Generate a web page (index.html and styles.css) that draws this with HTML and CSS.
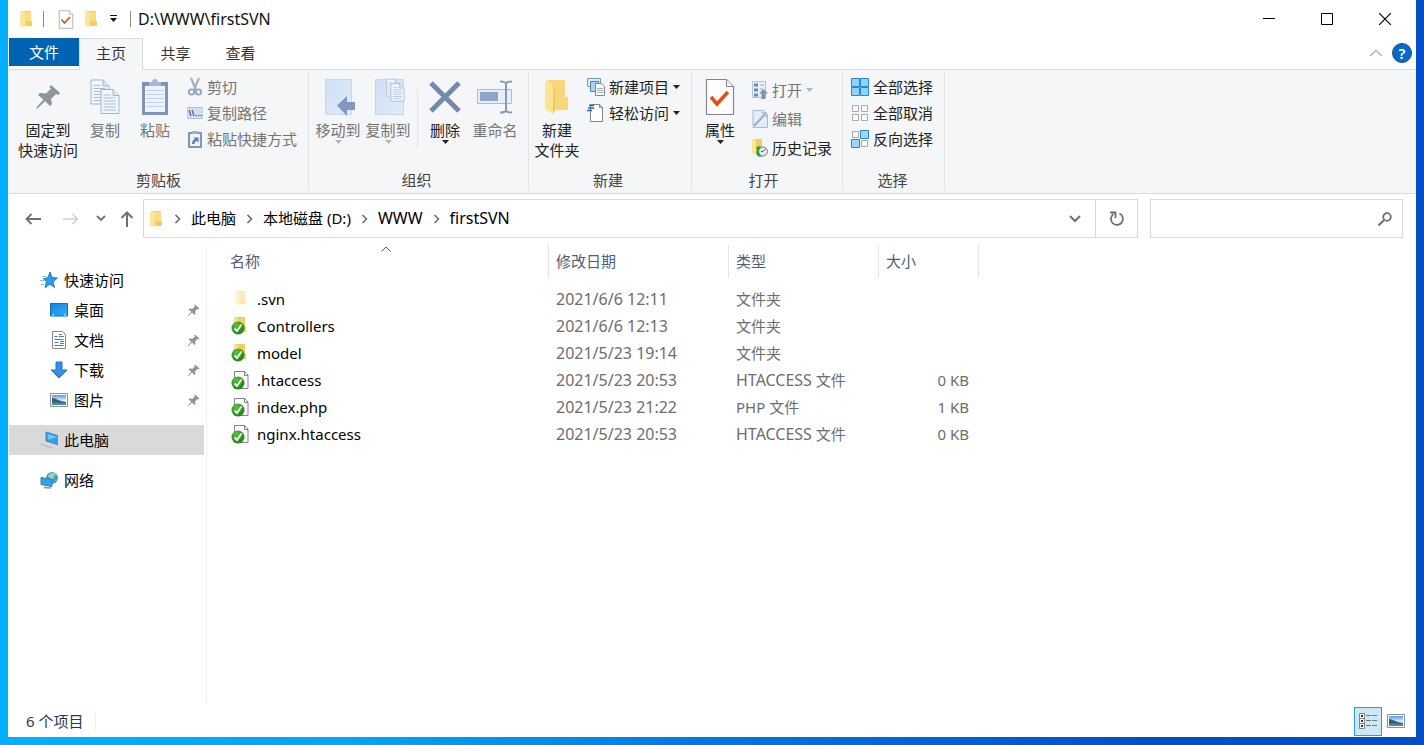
FILE: index.html
```html
<!DOCTYPE html>
<html lang="zh-CN">
<head>
<meta charset="utf-8">
<title>D:\WWW\firstSVN</title>
<link rel="stylesheet" href="styles.css">
</head>
<body>
<svg class="defs" aria-hidden="true">
  <defs>
    <linearGradient id="gFold" x1="0" x2="1"><stop offset="0" stop-color="#ffe9a2"/><stop offset="1" stop-color="#f6cf5f"/></linearGradient>
    <linearGradient id="gBlue" x1="0" y1="0" x2="1" y2="1"><stop offset="0" stop-color="#1583dc"/><stop offset="1" stop-color="#2cb0fb"/></linearGradient>
    <linearGradient id="gPale" x1="0" y1="0" x2="1" y2="1"><stop offset="0" stop-color="#cfdff5"/><stop offset="1" stop-color="#e0ebfa"/></linearGradient>
    <radialGradient id="gGreen" cx=".4" cy=".3" r=".8"><stop offset="0" stop-color="#5cc23f"/><stop offset="1" stop-color="#15780f"/></radialGradient>
    <linearGradient id="gSky" x1="0" y1="0" x2="0" y2="1"><stop offset="0" stop-color="#5d9be0"/><stop offset=".6" stop-color="#e4f3fb"/></linearGradient>
  </defs>
  <symbol id="folder" viewBox="0 0 16 18">
    <path d="M4 1h9v10h1v5H4z" fill="#f5cd62"/>
    <path d="M2 1l5 1v14.500L5 17l-3-1.500z" fill="#ffe69a"/>
    <path d="M7 2h6v9H7z" fill="#fbdc80"/>
  </symbol>
  <symbol id="checkdoc" viewBox="0 0 30 38">
    <path d="M1.500 1.500h20l7 7v28h-27z" fill="#fff" stroke="#85838f" stroke-width="1.200"/>
    <path d="M21.500 1.500v7h7" fill="#eef2f7" stroke="#85838f"/>
    <path d="M6 19l6 7 11-12" fill="none" stroke="#e25018" stroke-width="3.500"/>
  </symbol>
  <symbol id="pin" viewBox="0 0 26 26">
    <path d="M16 1l9 8-2 2-2-1-5 5 1 5-2 2-5-5-7 7-2 1 1-2 6.500-7.500L3 11l2-2 6 .500 5-5L14.500 3z" fill="#8d949b"/>
  </symbol>
  <symbol id="page" viewBox="0 0 20 26">
    <path d="M1 1h12l6 6v18H1z" fill="#f3f7fd" stroke="#9fb3d3"/>
    <path d="M13 1v6h6" fill="#dce7f6" stroke="#9fb3d3"/>
    <path d="M3.500 6.500h7M3.500 9.500h12M3.500 12.500h12.500M3.500 15.500h12.500M3.500 18.500h12.500M3.500 21.500h12.500" stroke="#a9bcda"/>
  </symbol>
  <symbol id="photo" viewBox="0 0 18 14">
    <path d="M.5.5h17v13H.5z" fill="#fff" stroke="#8b9198"/>
    <path d="M2 2h14v10H2z" fill="url(#gSky)"/>
    <path d="M2 5c4 0 6 3 14 4v2H2z" fill="#2d6469"/>
    <path d="M2 10c5-1 9 0 14 0v2H2z" fill="#4a86b8"/>
  </symbol>
  <symbol id="badge" viewBox="0 0 14 14">
    <circle cx="7" cy="7" r="6.500" fill="url(#gGreen)"/>
    <path d="M3.500 7.500L6 10l4.500-6.500" fill="none" stroke="#f2fff0" stroke-width="1.800"/>
  </symbol>
  <symbol id="vfolder" viewBox="0 0 20 20">
    <path d="M5 1h10v10h1v5H5z" fill="#f2cc5c"/><path d="M4 1l4 1v13l-4 1z" fill="#ffe08a"/>
    <use href="#badge" x="1" y="5" width="14" height="14"/>
  </symbol>
  <symbol id="vfile" viewBox="0 0 20 20">
    <path d="M4.500 1.500h10l3.500 3.500v13.500H4.500z" fill="#fff" stroke="#83838b"/><path d="M14.500 1.500v4H18" fill="none" stroke="#83838b"/>
    <use href="#badge" x="1" y="6" width="14" height="14"/>
  </symbol>
  <symbol id="down" viewBox="0 0 7 4"><path d="M0 0h7L3.500 4z" fill="currentColor"/></symbol>
  <symbol id="next" viewBox="0 0 7 10"><path d="M1.500 1l4 4-4 4" fill="none" stroke="#6b6b6b" stroke-width="1.600"/></symbol>
</svg>

<main class="window">
  <header class="titlebar">
    <svg class="i-folder" viewBox="0 0 16 18"><use href="#folder"/></svg>
    <span class="tick"></span>
    <button class="qa qa-wide" aria-label="属性"><svg width="16" height="19"><use href="#checkdoc"/></svg></button>
    <button class="qa" aria-label="新建文件夹"><svg class="i-folder" viewBox="0 0 16 18"><use href="#folder"/></svg></button>
    <button class="qa qa-menu" aria-label="自定义快速访问工具栏"><svg width="9" height="8"><path d="M1 .5h7" stroke="#111"/><path d="M1 3h7L4.500 7z" fill="#111"/></svg></button>
    <span class="tick tick-end"></span>
    <h1 class="title latin">D:\WWW\firstSVN</h1>
    <div class="controls">
      <button aria-label="最小化"><svg width="12" height="12"><path d="M0 5.500h12" stroke="#000"/></svg></button>
      <button aria-label="最大化"><svg width="12" height="12"><path d="M.5.5h11v11H.5z" fill="none" stroke="#000"/></svg></button>
      <button aria-label="关闭"><svg width="12" height="12"><path d="M0 0l12 12M12 0L0 12" stroke="#000" stroke-width="1.200"/></svg></button>
    </div>
  </header>

  <nav class="tabs">
    <button class="tab file">文件</button>
    <button class="tab active">主页</button>
    <button class="tab">共享</button>
    <button class="tab">查看</button>
    <div class="tabs-end">
      <button aria-label="折叠功能区"><svg width="14" height="8"><path d="M1 7l6-5.500L13 7" fill="none" stroke="#b4b4b4" stroke-width="1.500"/></svg></button>
      <button class="help" aria-label="帮助">?</button>
    </div>
  </nav>

  <section class="ribbon">
    <div class="group clipboard">
      <div class="tools">
        <button class="big wide"><svg width="26" height="38" viewBox="0 0 26 38"><use href="#pin" y="6" width="26" height="26"/></svg><span>固定到<br>快速访问</span></button>
        <button class="big off"><svg width="32" height="38" viewBox="0 0 32 38"><use href="#page" x="1" y="1" width="20" height="26"/><use href="#page" x="11" y="10" width="20" height="27"/></svg><span>复制</span></button>
        <button class="big off"><svg width="28" height="38" viewBox="0 0 28 38"><path d="M1 4h26v33H1z" fill="#7f94b9"/><path d="M4 8h20v26H4z" fill="#eef3fb"/><path d="M8 4h3c0-4 6-4 6 0h3v4H8z" fill="#a9b7ce"/><path d="M5 12.500h18M5 16.500h18M5 20.500h18M5 24.500h18M5 28.500h18" stroke="#c3d2e9"/></svg><span>粘贴</span></button>
        <div class="list">
          <button class="small off"><svg width="16" height="20"><path d="M4 1l5 12M12 1L7 13" stroke="#a3abb6" stroke-width="2" fill="none"/><circle cx="4.500" cy="15" r="2.700" fill="none" stroke="#8fa4c8" stroke-width="1.800"/><circle cx="11.500" cy="15" r="2.700" fill="none" stroke="#8fa4c8" stroke-width="1.800"/></svg>剪切</button>
          <button class="small off"><svg width="16" height="12"><path d="M0 .5h16v11H0z" fill="#d3dff1" stroke="#b1c0d9"/><path d="M2 3l2 6M5 3l2 6" stroke="#44618f" stroke-width="1.200"/><path d="M8.500 8.500h1.500M11 8.500h1.500M13.500 8.500h1.500" stroke="#44618f"/></svg>复制路径</button>
          <button class="small off"><svg width="16" height="18"><path d="M2 3h12v14H2z" fill="#eef4fc" stroke="#8297bb" stroke-width="2"/><path d="M5 1h6v3H5z" fill="#9fb0cc"/><path d="M5 14c0-3 1-4 3-5L6.500 7.500h5v5L10 11c-2 0-2 1-2.500 3z" fill="#5f7fb4"/></svg>粘贴快捷方式</button>
        </div>
      </div>
      <h2>剪贴板</h2>
    </div>

    <div class="group organize">
      <div class="tools">
        <button class="big off"><svg width="34" height="38" viewBox="0 0 34 38"><path d="M4.500 1.500h26v35h-26z" fill="url(#gPale)" stroke="#c6d6ed"/><path d="M16 27.500L26 18v6h8v8h-8v6z" fill="#8398bd"/></svg><span>移动到</span><svg class="arrow"><use href="#down"/></svg></button>
        <button class="big off"><svg width="34" height="38" viewBox="0 0 34 38"><path d="M4.500 1.500h28v35h-28z" fill="url(#gPale)" stroke="#c6d6ed"/><use href="#page" x="15" y="0" width="14" height="19"/><use href="#page" x="19" y="5" width="15" height="19"/></svg><span>复制到</span><svg class="arrow"><use href="#down"/></svg></button>
        <span class="divider"></span>
        <button class="big"><svg width="32" height="38" viewBox="0 0 32 38"><path d="M2 5l28 28M30 5L2 33" stroke="#7589ac" stroke-width="5"/></svg><span>删除</span><svg class="arrow"><use href="#down"/></svg></button>
        <button class="big off"><svg width="38" height="38" viewBox="0 0 38 38"><path d="M1.500 11.500h34v14h-34z" fill="#e6eefa" stroke="#a8bbda"/><path d="M4 14h18v9H4z" fill="#8fa5ca"/><path d="M24 3.500c3 0 5 0 6 2 1-2 3-2 6-2M24 34.500c3 0 5 0 6-2 1 2 3 2 6 2M30 5v28" fill="none" stroke="#8a9ab6" stroke-width="2"/></svg><span>重命名</span></button>
      </div>
      <h2>组织</h2>
    </div>

    <div class="group create">
      <div class="tools">
        <button class="big"><svg width="28" height="38" viewBox="0 0 28 38"><path d="M5 2h17v17h3v13H5z" fill="#f8d67a"/><path d="M2 2l8 4v30l-8-5z" fill="#ffe494"/><path d="M10 6v30l2-3V14z" fill="#f2c95f"/></svg><span>新建<br>文件夹</span></button>
        <div class="list">
          <button class="small"><svg width="18" height="18"><path d="M.5.5h13v8H.5z" fill="#d8ecfa" stroke="#6f9fc2"/><path d="M3.500 3.500h8v10h-8z" fill="#a5d4f5" stroke="#4f86b0"/><path d="M8.500 5.500h6l3 3v9h-9z" fill="#fff" stroke="#808791"/><path d="M10 10.500h6M10 12.500h6M10 14.500h6" stroke="#a7b0ba"/></svg>新建项目<svg class="arrow"><use href="#down"/></svg></button>
          <button class="small"><svg width="18" height="18"><path d="M3.500.5h9l3 3v14h-12z" fill="#fff" stroke="#80858d"/><path d="M12.500.5v3h3" fill="none" stroke="#80858d"/><path d="M0 6.500h5M1 4h6M2 1.500h5" stroke="#2a6ba8" stroke-width="1.300"/></svg>轻松访问<svg class="arrow"><use href="#down"/></svg></button>
        </div>
      </div>
      <h2>新建</h2>
    </div>

    <div class="group open">
      <div class="tools">
        <button class="big"><svg width="30" height="38"><use href="#checkdoc"/></svg><span>属性</span><svg class="arrow"><use href="#down"/></svg></button>
        <div class="list loose">
          <button class="small off"><svg width="16" height="18"><path d="M.5.5h13v16H.5z" fill="#e8effa" stroke="#b3c3dc"/><path d="M2 2.500h4v3H2zM2 7.500h4v3H2zM2 12.500h4v3H2z" fill="#7089b3"/><path d="M8 4h4M8 8h3" stroke="#9cadc9"/><path d="M7 12.500L11.500 8l4.500 4.500h-2.500V18h-4v-5.500z" fill="#8295b5"/></svg>打开<svg class="arrow"><use href="#down"/></svg></button>
          <button class="small off"><svg width="16" height="18"><path d="M1 .5h10.500l4 4v13H1z" fill="#e3ecf9" stroke="#a9bad6"/><path d="M2 16L14 3" stroke="#9aadcb" stroke-width="2"/><path d="M9 2h6v6z" fill="#b0c1dc"/></svg>编辑</button>
          <button class="small"><svg width="16" height="18"><path d="M2 0h8v14H2z" fill="#f5cd62"/><path d="M0 0l4 1v15l-4-2z" fill="#ffe596"/><circle cx="11" cy="12.500" r="4.500" fill="#e7e9e8" stroke="#777d80"/><path d="M11 12.500l2.500-2.500M11 12.500h-2" stroke="#555"/><path d="M4 8l5-1-1 2c-2 3-1 6 2 9-5 0-7-3-5-7z" fill="#27a239"/></svg>历史记录</button>
        </div>
      </div>
      <h2>打开</h2>
    </div>

    <div class="group select">
      <div class="tools">
        <div class="list">
          <button class="small"><svg width="18" height="18"><path d="M.5.5h8v8h-8zM9.500.5h8v8h-8zM.5 9.500h8v8h-8zM9.500 9.500h8v8h-8z" fill="#8fd3fb" stroke="#2a86cc"/></svg>全部选择</button>
          <button class="small"><svg width="18" height="18"><path d="M1.500 1.500h6v6h-6zM10.500 1.500h6v6h-6zM1.500 10.500h6v6h-6zM10.500 10.500h6v6h-6z" fill="#fafafa" stroke="#a9a9a9"/></svg>全部取消</button>
          <button class="small"><svg width="18" height="18"><path d="M1.500 1.500h6v6h-6zM10.500 10.500h6v6h-6z" fill="#fafafa" stroke="#a9a9a9"/><path d="M9.500.5h8v8h-8zM.5 9.500h8v8h-8z" fill="#9ad8fb" stroke="#2a86cc"/></svg>反向选择</button>
        </div>
      </div>
      <h2>选择</h2>
    </div>
  </section>

  <div class="navbar">
    <div class="history">
      <button aria-label="后退"><svg width="16" height="12"><path d="M16 6H2M6.500 1L1.500 6l5 5" fill="none" stroke="#707070" stroke-width="1.800"/></svg></button>
      <button aria-label="前进"><svg width="16" height="12"><path d="M0 6h14M9.500 1l5 5-5 5" fill="none" stroke="#cfcfcf" stroke-width="1.500"/></svg></button>
      <button class="recent" aria-label="最近位置"><svg width="10" height="7"><path d="M1 1l4 4 4-4" fill="none" stroke="#707070" stroke-width="1.800"/></svg></button>
      <button class="up" aria-label="上移"><svg width="14" height="16"><path d="M7 16V2M1.500 7L7 1.500 12.500 7" fill="none" stroke="#707070" stroke-width="2"/></svg></button>
    </div>
    <div class="address">
      <svg class="i-folder" viewBox="0 0 16 18"><use href="#folder"/></svg>
      <svg class="next"><use href="#next"/></svg><a href="#pc">此电脑</a>
      <svg class="next"><use href="#next"/></svg><a href="#d">本地磁盘 (D:)</a>
      <svg class="next"><use href="#next"/></svg><a class="latin" href="#www">WWW</a>
      <svg class="next"><use href="#next"/></svg><a class="latin" href="#svn">firstSVN</a>
      <button class="drop" aria-label="以前的位置"><svg width="12" height="8"><path d="M1 1l5 5 5-5" fill="none" stroke="#707070" stroke-width="2"/></svg></button>
      <button class="refresh" aria-label="刷新"><svg width="16" height="16"><path d="M10.500 2.500A6 6 0 1 1 4.500 3" fill="none" stroke="#707070" stroke-width="1.800"/><path d="M1 1.500h5.500V7" fill="none" stroke="#707070" stroke-width="1.800"/></svg></button>
    </div>
    <div class="search">
      <input type="search" aria-label="搜索">
      <svg width="14" height="14"><circle cx="9" cy="5" r="3.800" fill="none" stroke="#707070" stroke-width="1.800"/><path d="M6 8l-5.500 5.500" stroke="#707070" stroke-width="2"/></svg>
    </div>
  </div>

  <div class="content">
    <aside class="sidebar">
      <a class="root" href="#quick"><svg width="18" height="18"><path d="M10 1l2 5.500 5.500.5-4.500 3.500 1.500 6L10 13l-5 3.500 1.500-6-3-2.500 4.500-1.500z" fill="#2a9df0" stroke="#1b7dcc"/><path d="M2 5.500h4M0 9.500h4M1 13.500h3" stroke="#7cc3f5"/></svg>快速访问</a>
      <a class="leaf" href="#desktop"><svg width="18" height="14"><path d="M.5.5h17v12.500H.5z" fill="url(#gBlue)" stroke="#0c6fc1"/><path d="M2 12h2M14 12h2" stroke="#d4efff"/></svg>桌面<svg class="pinned"><use href="#pin"/></svg></a>
      <a class="leaf" href="#docs"><svg width="18" height="18"><path d="M2.500.5h10l3 3v14h-13z" fill="#fff" stroke="#868b91"/><path d="M4.500 5.500h3M9 3.500h3M9 5.500h5M4.500 8.500h9M4.500 11.500h4M10 10.500h4M10 12.500h4M4.500 14.500h9" stroke="#3486c6"/></svg>文档<svg class="pinned"><use href="#pin"/></svg></a>
      <a class="leaf" href="#downloads"><svg width="18" height="18"><path d="M6 1h6v8h5l-8 8-8-8h5z" fill="#368fe4" stroke="#2678c8"/></svg>下载<svg class="pinned"><use href="#pin"/></svg></a>
      <a class="leaf" href="#pictures"><svg width="18" height="14"><use href="#photo"/></svg>图片<svg class="pinned"><use href="#pin"/></svg></a>
      <a class="root section current" href="#pc"><svg width="20" height="18"><path d="M6 1l13 4v9L6 10z" fill="#2ba2ef" stroke="#5c7f9c"/><path d="M7.500 3l10 3-9 3z" fill="#6cc8fa"/><path d="M0 13c5 1 7 4 12 3" fill="none" stroke="#a9aeb2"/></svg>此电脑</a>
      <a class="root section" href="#network"><svg width="20" height="18"><circle cx="12" cy="7" r="6" fill="#4f9fc1"/><path d="M8 5c3-4 7-4 8-2-2 2-3 3-3 5-2 0-4-1-5-3z" fill="#9bd3c9"/><path d="M1 6.500l11 2v7l-11-2z" fill="#2fa4f0" stroke="#3978a5"/><path d="M4 16.500l7 .5" stroke="#8a9299" stroke-width="1.500"/></svg>网络</a>
    </aside>

    <div class="files">
      <table>
        <colgroup><col class="c-name"><col class="c-date"><col class="c-type"><col class="c-size"></colgroup>
        <thead>
          <tr><th class="name">名称<svg class="sort" width="10" height="6"><path d="M.5 5.500L5 1l4.500 4.500" fill="none" stroke="#555"/></svg></th><th>修改日期</th><th>类型</th><th>大小</th></tr>
        </thead>
        <tbody>
          <tr><td><span class="entry"><svg class="faded" width="20" height="20"><use href="#folder" x="3" y="1" width="15" height="16"/></svg>.svn</span></td><td class="latin">2021/6/6 12:11</td><td>文件夹</td><td></td></tr>
          <tr><td><span class="entry"><svg width="20" height="20"><use href="#vfolder"/></svg>Controllers</span></td><td class="latin">2021/6/6 12:13</td><td>文件夹</td><td></td></tr>
          <tr><td><span class="entry"><svg width="20" height="20"><use href="#vfolder"/></svg>model</span></td><td class="latin">2021/5/23 19:14</td><td>文件夹</td><td></td></tr>
          <tr><td><span class="entry"><svg width="20" height="20"><use href="#vfile"/></svg>.htaccess</span></td><td class="latin">2021/5/23 20:53</td><td><span class="latin">HTACCESS</span> 文件</td><td>0 KB</td></tr>
          <tr><td><span class="entry"><svg width="20" height="20"><use href="#vfile"/></svg>index.php</span></td><td class="latin">2021/5/23 21:22</td><td>PHP 文件</td><td>1 KB</td></tr>
          <tr><td><span class="entry"><svg width="20" height="20"><use href="#vfile"/></svg>nginx.htaccess</span></td><td class="latin">2021/5/23 20:53</td><td><span class="latin">HTACCESS</span> 文件</td><td>0 KB</td></tr>
        </tbody>
      </table>
    </div>
  </div>

  <footer class="status">
    <span class="count">6 个项目</span>
    <button class="view on" aria-label="详细信息"><svg width="20" height="18"><path d="M1.500 1.500h5v5h-5zM1.500 6.500h5v5h-5zM1.500 11.500h5v5h-5z" fill="#fff" stroke="#86817a"/><path d="M3 4h2M3 9h2M3 14h2" stroke="#333" stroke-width="2"/><path d="M8 3.500h5M14 3.500h5M8 8.500h5M14 8.500h5M8 13.500h5M14 13.500h5" stroke="#6d7a80"/></svg></button>
    <button class="view" aria-label="大缩略图"><svg width="18" height="14"><use href="#photo"/></svg></button>
  </footer>
</main>
</body>
</html>
```

FILE: styles.css
```css
* { box-sizing: border-box; }

body {
  margin: 0;
  min-height: 100vh;
  display: flex;
  padding: 0 8px 8px;
  background: linear-gradient(90deg, #00b0ff 0%, #00a4f8 25%, #0078e0 50%, #0050cc 80%, #004fc8 100%);
  font: 15px/20px "Noto Sans", "Noto Sans CJK SC", sans-serif;
  color: #000;
}

button {
  font: inherit;
  color: inherit;
  background: none;
  border: 0;
  padding: 0;
  display: flex;
  align-items: center;
  justify-content: center;
}

a { color: inherit; text-decoration: none; }
svg { display: block; flex: none; }
h1, h2 { margin: 0; font: inherit; }

.defs { position: absolute; width: 0; height: 0; }
.i-folder { width: 16px; height: 18px; }
.arrow { width: 7px; height: 4px; }
.latin { font-size: 16px; }

.window {
  flex: 1;
  min-width: 0;
  display: flex;
  flex-direction: column;
  padding-left: 1px;
  background: #fff;
}

/* Title bar */
.titlebar {
  display: flex;
  align-items: center;
  height: 38px;
  padding-left: 9px;
}
.tick { width: 1px; height: 16px; margin: 0 7px 0 9px; background: #8a8a8a; }
.tick-end { margin: 0 7px 0 5px; }
.qa { width: 20px; }
.qa-wide { width: 30px; }
.qa-menu { width: 24px; }
.title { color: #111; font-size: 16px; }
.controls { display: flex; margin-left: auto; padding-right: 2px; }
.controls button { width: 58px; height: 38px; }

/* Ribbon tabs */
.tabs {
  display: flex;
  align-items: flex-start;
  height: 32px;
  border-bottom: 1px solid #dadbdc;
}
.tab { width: 65px; height: 31px; padding-bottom: 2px; color: #333; }
.tab.file { width: 70px; height: 28px; padding: 0; color: #fff; background: #0063b1; }
.tab.active {
  width: 64px;
  height: 32px;
  padding-bottom: 3px;
  background: #f5f6f7;
  border: 1px solid #dadbdc;
  border-bottom: 0;
}
.tabs-end { display: flex; align-items: center; gap: 9px; height: 30px; margin-left: auto; padding-right: 4px; }
.help {
  width: 20px;
  height: 20px;
  border-radius: 50%;
  border: 1px solid #1b4f8a;
  background: #0769cc;
  color: #fff;
  font-weight: 600;
}

/* Ribbon */
.ribbon {
  display: flex;
  height: 124px;
  background: #f4f6f8;
  border-bottom: 1px solid #dadbdc;
}
.group {
  display: flex;
  flex-direction: column;
  justify-content: space-between;
  margin: 2px 0;
  padding-top: 6px;
  padding-bottom: 1px;
  border-right: 1px solid #e2e3e4;
}
.group h2 { text-align: center; color: #444; }
.clipboard { padding-left: 7px; padding-right: 11px; }
.organize { padding-left: 4px; padding-right: 8px; }
.create { padding-left: 3px; padding-right: 11px; }
.open { padding-left: 3px; padding-right: 10px; }
.select { padding-left: 1px; padding-right: 11px; }
.clipboard h2, .create h2 { padding-left: 4px; }
.select h2 { padding-left: 8px; }

.tools { display: flex; align-items: flex-start; }
.big { flex-direction: column; width: 50px; color: #222; white-space: nowrap; }
.big.wide { width: 64px; }
.big span { margin-top: 4px; }
.off, .big.off { color: #747474; }
.off .arrow { color: #b5b5b5; }
.divider { width: 1px; height: 58px; margin: 12px 2px 0 4px; background: #e2e3e4; }
.list { margin-top: -4px; padding-left: 7px; }
.create .list { padding-left: 5px; }
.small { gap: 4px; height: 26px; color: #222; white-space: nowrap; }
.small.off { color: #747474; }
.list.loose { margin-top: -3px; }
.loose .small { height: 29px; }

/* Navigation row */
.navbar {
  display: flex;
  align-items: center;
  height: 51px;
  padding: 0 13px 2px 5px;
}
.history { display: flex; flex: none; align-items: center; width: 129px; }
.history button { width: 38px; height: 38px; }
.history .recent { width: 22px; }
.history .up { width: 30px; }
.address {
  flex: 1;
  display: flex;
  align-items: center;
  gap: 10px;
  height: 39px;
  padding-left: 4px;
  border: 1px solid #d9d9d9;
}
.address a { padding-bottom: 2px; }
.next { width: 7px; height: 10px; }
.drop { margin-left: auto; width: 20px; height: 37px; }
.refresh { width: 42px; height: 37px; border-left: 1px solid #d9d9d9; }
.search {
  flex: 0 1 253px;
  min-width: 0;
  display: flex;
  align-items: center;
  height: 39px;
  margin-left: 12px;
  padding: 0 10px;
  border: 1px solid #d9d9d9;
}
.search input { flex: 1; width: 100%; min-width: 0; padding: 0; border: 0; outline: 0; background: none; font: inherit; }

/* Body */
.content { flex: 1; display: flex; }
.sidebar {
  width: 198px;
  padding: 20px 2px 0 0;
  border-right: 1px solid #f0f0f0;
}
.sidebar a { display: flex; align-items: center; gap: 6px; height: 30px; }
.root { padding-left: 31px; }
.root svg { width: 18px; }
.leaf { padding-left: 41px; }
.section { margin-top: 10px; }
.current { background: #d9d9d9; }
.pinned { width: 13px; height: 13px; margin-left: auto; margin-right: 4px; }

.files { flex: 1; }
table { table-layout: fixed; width: 772px; border-collapse: separate; border-spacing: 0; }
.c-name { width: 342px; }
.c-date { width: 180px; }
.c-type { width: 150px; }
.c-size { width: 100px; }
th {
  height: 33px;
  padding: 0 7px 2px;
  border-right: 1px solid #e5e5e5;
  color: #4c607a;
  font-weight: 400;
  text-align: left;
}
th.name { position: relative; padding-left: 23px; }
.sort { position: absolute; top: 1px; left: 174px; }
tbody::before { content: ""; display: block; height: 8px; }
td { height: 27px; padding: 0 7px 2px; color: #6d6d6d; white-space: nowrap; }
td:first-child { padding-left: 23px; color: #000; }
td:last-child { padding-right: 10px; text-align: right; }
.entry { display: flex; align-items: center; gap: 7px; }
.faded { opacity: .5; }

/* Status bar */
.status { display: flex; align-items: center; height: 34px; padding: 2px 6px 0 17px; }
.count { margin-right: auto; padding-right: 12px; border-right: 1px solid #f0f0f0; color: #1e395b; }
.view { width: 28px; height: 29px; }
.view.on { border: 1px solid #26a0da; background: #cce8f6; }
```
